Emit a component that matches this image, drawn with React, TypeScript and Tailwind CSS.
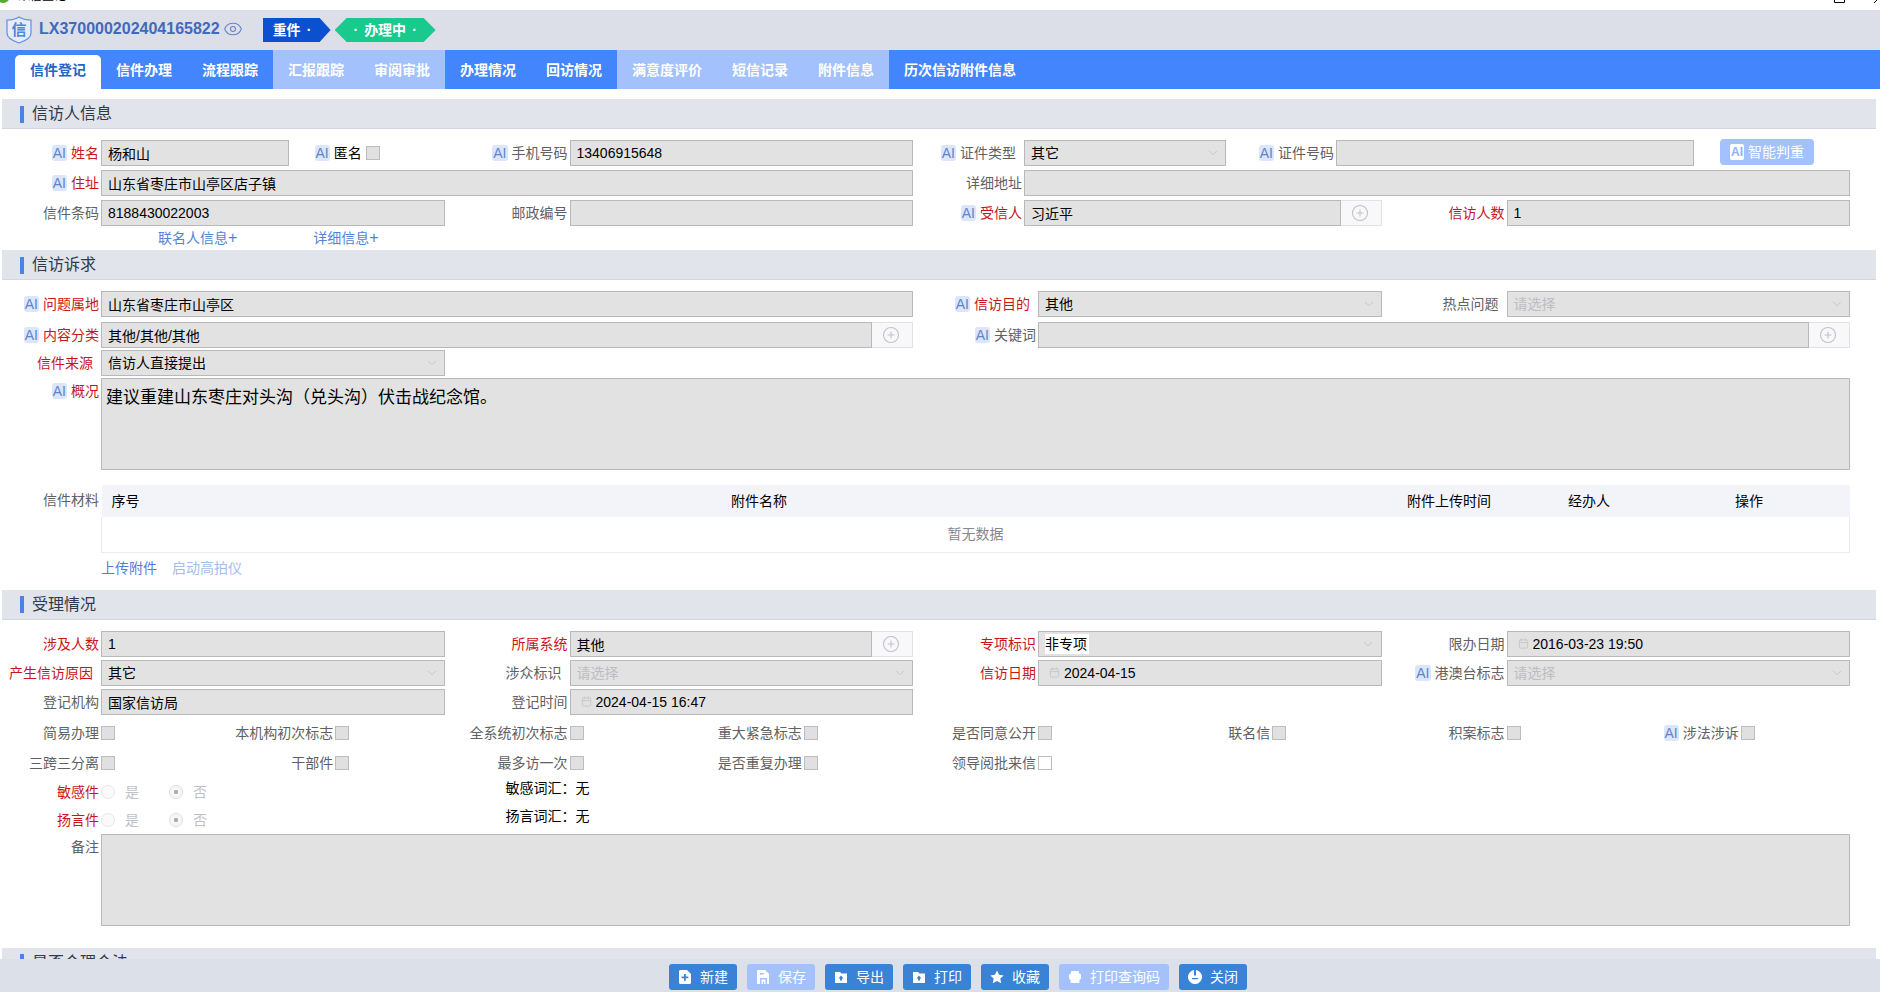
import clsx from "clsx";
import { Calendar, ChevronDown, CirclePlus, Eye } from "lucide-react";
import React, { createContext, ReactNode, useContext, useId } from "react";

const FieldId = createContext("");

const box = "h-[26px] border border-[#b9b9b9] bg-[#e2e2e2] text-sm";

function AiTag() {
  return (
    <span className="mr-1 rounded-[3px] bg-[#dbe6fa] px-px text-sm leading-4 text-[#5f84cc]">
      AI
    </span>
  );
}

interface ILabelProps {
  text: string;
  htmlFor?: string;
  ai?: boolean;
  required?: boolean;
  /** Leaves a wider gap between the text and its field */
  spaced?: boolean;
  className?: string;
}

function Label({ text, htmlFor, ai, required, spaced, className }: ILabelProps) {
  return (
    <label
      htmlFor={htmlFor}
      className={clsx(
        "flex h-[26px] shrink-0 items-center justify-end whitespace-nowrap text-sm",
        required ? "text-[#c8161d]" : "text-[#5f6163]",
        spaced ? "pr-2" : "pr-0.5",
        className ?? "w-[99px]"
      )}
    >
      {ai && <AiTag />}
      {text}
    </label>
  );
}

interface IFieldProps {
  label: string;
  ai?: boolean;
  required?: boolean;
  spaced?: boolean;
  labelClass?: string;
  className?: string;
  children: ReactNode;
}

function Field({ label, ai, required, spaced, labelClass, className, children }: IFieldProps) {
  const id = useId();
  return (
    <FieldId.Provider value={id}>
      <div className={clsx("flex min-w-0 items-start pr-[26px]", className)}>
        <Label
          text={label}
          htmlFor={id}
          ai={ai}
          required={required}
          spaced={spaced}
          className={labelClass}
        />
        {children}
      </div>
    </FieldId.Provider>
  );
}

function TextBox({ value = "" }: { value?: string }) {
  const id = useContext(FieldId);
  return (
    <input
      id={id}
      type="text"
      readOnly
      value={value}
      className={clsx(box, "min-w-0 flex-1 px-1.5 text-black")}
    />
  );
}

function SelectBox({ value, className }: { value?: string; className?: string }) {
  const id = useContext(FieldId);
  return (
    <div className={clsx("relative min-w-0", className ?? "flex-1")}>
      <select
        id={id}
        disabled
        className={clsx(
          box,
          "block w-full appearance-none px-1.5 opacity-100",
          value ? "text-black" : "text-[#bcbec2]"
        )}
      >
        <option>{value ?? "请选择"}</option>
      </select>
      <ChevronDown className="pointer-events-none absolute right-1.5 top-1.5 size-3.5 text-[#bfc1c6]" strokeWidth={1.5} />
    </div>
  );
}

function PickerBox({ value = "" }: { value?: string }) {
  const id = useContext(FieldId);
  return (
    <div className="flex min-w-0 flex-1">
      <input
        id={id}
        type="text"
        readOnly
        value={value}
        className={clsx(box, "min-w-0 flex-1 px-1.5 text-black")}
      />
      <button
        type="button"
        aria-label="选择"
        className="flex h-[26px] w-[41px] items-center border border-l-0 border-[#e1e2e6] bg-[#f8f8fb] pl-2.5"
      >
        <CirclePlus className="size-[18px] text-[#bfc2c8]" strokeWidth={1.5} />
      </button>
    </div>
  );
}

function DateBox({ value }: { value: string }) {
  const id = useContext(FieldId);
  return (
    <div className={clsx(box, "flex min-w-0 flex-1 items-center gap-1 pl-2.5 text-black")}>
      <Calendar className="size-[11px] text-[#c6c7ca]" strokeWidth={2} />
      <input id={id} type="text" readOnly value={value} className="min-w-0 flex-1 bg-transparent" />
    </div>
  );
}

function ProjectBox() {
  const id = useContext(FieldId);
  return (
    <div className={clsx(box, "flex min-w-0 flex-1 items-center justify-between px-1.5 text-black")}>
      <input id={id} type="text" readOnly value="非专项" className="h-5 w-11 bg-white" />
      <ChevronDown className="size-3.5 text-[#b9bbc0]" strokeWidth={1.5} />
    </div>
  );
}

function Summary({ value = "" }: { value?: string }) {
  const id = useContext(FieldId);
  return (
    <textarea
      id={id}
      readOnly
      value={value}
      className="h-[92px] min-w-0 flex-1 resize-none border border-[#b9b9b9] bg-[#e2e2e2] px-1 py-[7px] text-[17px] leading-6 text-black"
    />
  );
}

function Tick({ enabled }: { enabled?: boolean }) {
  const id = useContext(FieldId);
  return (
    <input
      id={id}
      type="checkbox"
      disabled={!enabled}
      className={clsx(
        "my-1.5 size-3.5 shrink-0 appearance-none border border-[#bdbdbd]",
        enabled ? "bg-white" : "bg-[#e0e0e2]"
      )}
    />
  );
}

function SectionTitle({ children }: { children: ReactNode }) {
  return (
    <h2 className="flex h-[30px] shrink-0 items-center gap-2 border-b border-[#d3d6dc] bg-[#e1e4eb] pl-[18px] pt-px text-base text-[#2f3a4a]">
      <span className="h-[17px] w-1 bg-[#4a82e8]" />
      {children}
    </h2>
  );
}

function YesNo({ label, words }: { label: string; words: string }) {
  const name = useId();
  return (
    <div className="grid h-7 grid-cols-8">
      <fieldset className="col-span-2 flex items-center text-sm text-[#bfc1c5]">
        <legend className="float-left flex w-[99px] justify-end pr-0.5 leading-7 text-[#c8161d]">
          {label}
        </legend>
        {["是", "否"].map((option) => (
          <label key={option} className="flex w-[68px] items-center gap-2.5">
            <input
              type="radio"
              name={name}
              disabled
              defaultChecked={option === "否"}
              className="size-3.5 appearance-none rounded-full border border-[#e6e7ea] bg-[#fafafa] checked:border-[#dcdee3] checked:bg-radial checked:from-[#a9abb0] checked:from-20% checked:to-[#f6f6f8] checked:to-30%"
            />
            {option}
          </label>
        ))}
      </fieldset>
      <p className="col-span-2 pl-[35px] text-sm leading-5 text-black">
        {words}：无
      </p>
    </div>
  );
}

const tabs = [
  { name: "信件登记", state: "active" },
  { name: "信件办理" },
  { name: "流程跟踪" },
  { name: "汇报跟踪", state: "disabled" },
  { name: "审阅审批", state: "disabled" },
  { name: "办理情况" },
  { name: "回访情况" },
  { name: "满意度评价", state: "disabled" },
  { name: "短信记录", state: "disabled" },
  { name: "附件信息", state: "disabled" },
  { name: "历次信访附件信息" },
];

const flags = [
  { name: "简易办理" },
  { name: "本机构初次标志" },
  { name: "全系统初次标志" },
  { name: "重大紧急标志" },
  { name: "是否同意公开" },
  { name: "联名信" },
  { name: "积案标志" },
  { name: "涉法涉诉", ai: true },
  { name: "三跨三分离" },
  { name: "干部件" },
  { name: "最多访一次" },
  { name: "是否重复办理" },
  { name: "领导阅批来信", enabled: true },
];

const folder = (
  <path fillRule="evenodd" d="M1 2h5l1.500 1.500H13v9.500H1zM7 5.500 4.500 8.500H6v2h2v-2h1.500z" />
);

const actions = [
  {
    name: "新建",
    icon: <path fillRule="evenodd" d="M2 0h7l4 4v8.500q0 1.500-1.500 1.500h-9Q1 14 1 12.500V1.500Q1 0 2 0zM6 4v2.500H3.500v1.700H6v2.500h1.800V8.200h2.500V6.500H7.800V4z" />,
  },
  {
    name: "保存",
    disabled: true,
    icon: <path fillRule="evenodd" d="M2 0h7l4 4v10h-2V8H4v6H1V1q0-1 1-1zM4 3v1.500h4V3zM5.500 9.500h4V14H8v-2.500H7V14H5.500z" />,
  },
  { name: "导出", icon: folder },
  { name: "打印", icon: folder },
  {
    name: "收藏",
    icon: <path d="m7 .5 2 4.300 4.700.6-3.400 3.200.9 4.700L7 11l-4.200 2.300.9-4.700L.3 5.400 5 4.800z" />,
  },
  {
    name: "打印查询码",
    disabled: true,
    icon: <path d="M4 1h6q1 0 1 1v1.500q2 0 2 1.500v3q0 1.500-1.500 1.500V12q0 1-1 1H3.500q-1 0-1-1V9.500Q1 9.500 1 8V5q0-1.500 2-1.500V2q0-1 1-1z" />,
  },
  {
    name: "关闭",
    icon: <path fillRule="evenodd" d="M6 .1v5.400h2V.1A7 7 0 1 1 6 .1zM4 8v1.300h6V8z" />,
  },
];

function Header() {
  return (
    <header className="flex h-10 shrink-0 items-center bg-[#dcdfe8] pb-1 pl-1.5">
      <svg viewBox="0 0 26 28" className="mt-1 h-7 w-[26px]">
        <path
          d="M13 1c3 2 7 3 12 3v13c0 5-6 8-12 10C7 25 1 22 1 17V4c5 0 9-1 12-3z"
          fill="#e6edf9"
          stroke="#5c8fe4"
          strokeWidth="1.200"
        />
        <text x="13" y="19" fontSize="15" fontWeight="bold" textAnchor="middle" fill="#4a86e0">
          信
        </text>
      </svg>
      <h1 className="ml-[7px] mt-0.5 text-base font-bold text-[#4169bd]">LX370000202404165822</h1>
      <button type="button" aria-label="查看" className="ml-[3px] mt-0.5">
        <Eye className="size-5 text-[#6683cc]" strokeWidth={1.3} />
      </button>
      <span className="ml-5 mt-1 flex h-6 w-[68px] items-center gap-1.5 bg-[#0b51cf] pl-2.5 text-sm font-bold text-white [clip-path:polygon(0_0,57px_0,100%_50%,57px_100%,0_100%)]">
        重件 <span>·</span>
      </span>
      <span className="ml-1 mt-1 flex h-6 w-[101px] items-center justify-center gap-1.5 bg-[#19c98e] text-sm font-bold text-white [clip-path:polygon(12px_0,89px_0,100%_50%,89px_100%,12px_100%,0_50%)]">
        <span>·</span> 办理中 <span>·</span>
      </span>
    </header>
  );
}

function AttachmentTable() {
  return (
    <table className="min-w-0 flex-1 table-fixed border-collapse text-sm">
      <thead>
        <tr className="h-8 bg-[#f3f3fa] text-black">
          <th className="w-12 font-normal">序号</th>
          <th className="font-normal">附件名称</th>
          <th className="w-[161px] font-normal">附件上传时间</th>
          <th className="w-[119px] font-normal">经办人</th>
          <th className="w-[201px] font-normal">操作</th>
        </tr>
      </thead>
      <tbody>
        <tr className="h-[35px]">
          <td colSpan={5} className="border border-t-0 border-[#ebecf0] text-center text-[#85888e]">
            暂无数据
          </td>
        </tr>
      </tbody>
    </table>
  );
}

export default function App() {
  const anonId = useId();
  const cardNoId = useId();

  return (
    <div className="flex h-screen flex-col overflow-hidden bg-white font-['Liberation_Sans','Noto_Sans_CJK_SC',sans-serif]">
      <div className="flex h-2.5 shrink-0 items-end justify-between overflow-hidden pb-1.5 text-xs leading-4 text-black">
        <div className="flex items-center gap-2">
          <svg viewBox="0 0 14 14" className="-ml-1 size-3.5">
            <circle cx="7" cy="7" r="7" fill="#56ab2f" />
            <path d="M4 8q3 3 6 0" stroke="#fff" strokeWidth="1.500" fill="none" />
          </svg>
          来信登记
        </div>
        <svg viewBox="0 0 46 12" className="h-3 w-[46px] fill-none stroke-black">
          <path d="M.5.500h10v10H.5zM40 11 50 1" />
        </svg>
      </div>

      <Header />

      <nav className="flex h-[39px] shrink-0 items-end bg-[#4285fd] pl-[15px]">
        {tabs.map((tab) => (
          <button
            key={tab.name}
            type="button"
            disabled={tab.state === "disabled"}
            className={clsx(
              "px-[15px] text-sm font-bold",
              tab.state === "active" && "h-[34px] rounded-t-[5px] bg-white pb-1 text-[#2563c4]",
              tab.state === "disabled" && "h-full bg-[#a2c1fd] text-white",
              !tab.state && "h-full text-white"
            )}
          >
            {tab.name}
          </button>
        ))}
      </nav>

      <main className="min-h-0 flex-1 overflow-hidden pl-0.5 pr-1 pt-2.5">
        <SectionTitle>信访人信息</SectionTitle>
        <section className="grid grid-cols-8 gap-y-1 pt-[11px]">
          <Field label="姓名" ai required className="col-span-2">
            <TextBox value="杨和山" />
            <label htmlFor={anonId} className="flex h-[26px] w-[156px] items-center pl-[26px] text-sm text-black">
              <AiTag />
              匿名
              <input
                id={anonId}
                type="checkbox"
                disabled
                className="ml-1 size-3.5 appearance-none border border-[#bdbdbd] bg-[#e0e0e2]"
              />
            </label>
          </Field>
          <Field label="手机号码" ai className="col-span-2">
            <TextBox value="13406915648" />
          </Field>
          <Field label="证件类型" ai spaced labelClass="w-[85px]" className="col-span-4">
            <SelectBox value="其它" className="w-[202px] shrink-0" />
            <Label text="证件号码" htmlFor={cardNoId} ai className="w-[110px]" />
            <input
              id={cardNoId}
              type="text"
              readOnly
              value=""
              className={clsx(box, "min-w-0 flex-1 px-1.5 text-black")}
            />
            <button
              type="button"
              disabled
              className="-mt-px ml-[26px] mr-9 flex h-[26px] w-[94px] items-center justify-center gap-1 rounded bg-[#a2c1fd] text-sm text-white"
            >
              <span className="rounded-xs bg-white px-px text-xs leading-4 font-bold text-[#8fb1f5]">AI</span>
              智能判重
            </button>
          </Field>

          <Field label="住址" ai required className="col-span-4">
            <TextBox value="山东省枣庄市山亭区店子镇" />
          </Field>
          <Field label="详细地址" labelClass="w-[85px]" className="col-span-4">
            <TextBox />
          </Field>

          <Field label="信件条码" className="col-span-2">
            <TextBox value="8188430022003" />
          </Field>
          <Field label="邮政编号" className="col-span-2">
            <TextBox />
          </Field>
          <Field label="受信人" ai required labelClass="w-[85px]" className="col-span-2">
            <PickerBox value="习近平" />
          </Field>
          <Field label="信访人数" required className="col-span-2">
            <TextBox value="1" />
          </Field>
        </section>
        <div className="flex h-6 items-center gap-[76px] pl-[156px] text-sm text-[#5583d6]">
          <a href="#joint">联名人信息<span className="text-base leading-5">+</span></a>
          <a href="#detail">详细信息<span className="text-base leading-5">+</span></a>
        </div>

        <SectionTitle>信访诉求</SectionTitle>
        <section className="grid grid-cols-8 pt-[11px]">
          <Field label="问题属地" ai required className="col-span-4">
            <TextBox value="山东省枣庄市山亭区" />
          </Field>
          <Field label="信访目的" ai required spaced className="col-span-2">
            <SelectBox value="其他" />
          </Field>
          <Field label="热点问题" spaced className="col-span-2">
            <SelectBox />
          </Field>

          <Field label="内容分类" ai required className="col-span-4 mt-[5px]">
            <PickerBox value="其他/其他/其他" />
          </Field>
          <Field label="关键词" ai className="col-span-4 mt-[5px]">
            <PickerBox />
          </Field>

          <Field label="信件来源" required spaced className="col-span-2 mt-0.5">
            <SelectBox value="信访人直接提出" />
          </Field>

          <Field label="概况" ai required className="col-span-8 mt-0.5">
            <Summary value="建议重建山东枣庄对头沟（兑头沟）伏击战纪念馆。" />
          </Field>
        </section>
        <div className="mt-[15px] flex items-start pr-[26px]">
          <span className="w-[99px] shrink-0 pr-0.5 text-right text-sm leading-[30px] text-[#5f6163]">
            信件材料
          </span>
          <AttachmentTable />
        </div>
        <div className="mb-[7px] flex h-[30px] items-center gap-[15px] pl-[99px] text-sm">
          <a href="#upload" className="text-[#4b7fdc]">上传附件</a>
          <a href="#scanner" className="text-[#a3bdec]">启动高拍仪</a>
        </div>

        <SectionTitle>受理情况</SectionTitle>
        <section className="grid grid-cols-8 gap-y-[3px] pt-[11px]">
          <Field label="涉及人数" required className="col-span-2">
            <TextBox value="1" />
          </Field>
          <Field label="所属系统" required className="col-span-2">
            <PickerBox value="其他" />
          </Field>
          <Field label="专项标识" required className="col-span-2">
            <ProjectBox />
          </Field>
          <Field label="限办日期" className="col-span-2">
            <DateBox value="2016-03-23 19:50" />
          </Field>

          <Field label="产生信访原因" required spaced className="col-span-2">
            <SelectBox value="其它" />
          </Field>
          <Field label="涉众标识" spaced className="col-span-2">
            <SelectBox />
          </Field>
          <Field label="信访日期" required className="col-span-2">
            <DateBox value="2024-04-15" />
          </Field>
          <Field label="港澳台标志" ai className="col-span-2">
            <SelectBox />
          </Field>

          <Field label="登记机构" className="col-span-2">
            <TextBox value="国家信访局" />
          </Field>
          <Field label="登记时间" className="col-span-2">
            <DateBox value="2024-04-15 16:47" />
          </Field>
        </section>
        <div className="mt-[5px] grid grid-cols-8 gap-y-1 pb-0.5">
          {flags.map((flag) => (
            <Field key={flag.name} label={flag.name} ai={flag.ai}>
              <Tick enabled={flag.enabled} />
            </Field>
          ))}
        </div>
        <YesNo label="敏感件" words="敏感词汇" />
        <YesNo label="扬言件" words="扬言词汇" />
        <Field label="备注" className="mb-[22px]">
          <Summary />
        </Field>

        <SectionTitle>是否合理合法</SectionTitle>
      </main>

      <footer className="flex h-[33px] shrink-0 items-center justify-center gap-2.5 bg-[#dce0e9] pl-9">
        {actions.map((action) => (
          <button
            key={action.name}
            type="button"
            disabled={action.disabled}
            className={clsx(
              "mt-0.5 flex h-[26px] items-center gap-2 rounded-[3px] px-[9px] text-sm text-white",
              action.disabled ? "bg-[#a4c1fb]" : "bg-[#3982d6]"
            )}
          >
            <svg viewBox="0 0 14 14" className="size-3.5 fill-white">
              {action.icon}
            </svg>
            {action.name}
          </button>
        ))}
      </footer>
    </div>
  );
}
